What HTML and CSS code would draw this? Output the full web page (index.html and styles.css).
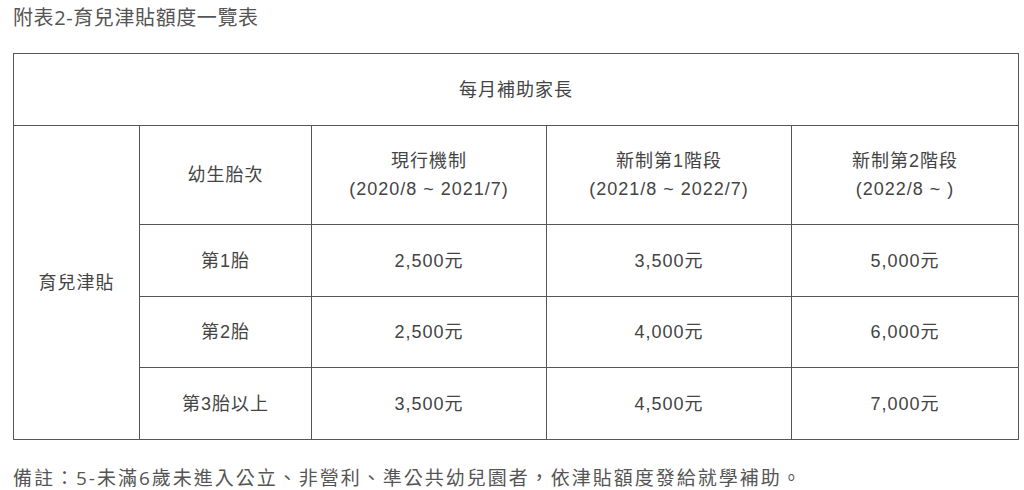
FILE: index.html
```html
<!DOCTYPE html>
<html lang="zh-TW">
<head>
<meta charset="utf-8">
<link rel="stylesheet" href="styles.css">
</head>
<body>
<div class="page">
  <div class="title">附表2-育兒津貼額度一覽表</div>
  <table class="grid">
    <colgroup>
      <col class="c1"><col class="c2"><col class="c3"><col class="c4"><col class="c5">
    </colgroup>
    <tr class="r-top"><td colspan="5">每月補助家長</td></tr>
    <tr class="r-head">
      <td rowspan="4">育兒津貼</td>
      <td>幼生胎次</td>
      <td>現行機制<br>(2020/8 ~ 2021/7)</td>
      <td>新制第1階段<br>(2021/8 ~ 2022/7)</td>
      <td>新制第2階段<br>(2022/8 ~ )</td>
    </tr>
    <tr class="r-a"><td>第1胎</td><td>2,500元</td><td>3,500元</td><td>5,000元</td></tr>
    <tr class="r-b"><td>第2胎</td><td>2,500元</td><td>4,000元</td><td>6,000元</td></tr>
    <tr class="r-c"><td>第3胎以上</td><td>3,500元</td><td>4,500元</td><td>7,000元</td></tr>
  </table>
  <div class="note">備註：5-未滿6歲未進入公立、非營利、準公共幼兒園者，依津貼額度發給就學補助。</div>
</div>
</body>
</html>
```
FILE: styles.css
```css
html, body {
  margin: 0;
  padding: 0;
  background: #ffffff;
}
.page {
  padding: 4px 0 0 13px;
}
.title {
  font-family: "Open Sans", "Noto Sans CJK TC", sans-serif;
  font-size: 20px;
  line-height: 28px;
  letter-spacing: 0.6px;
  color: #555555;
  height: 49px;
}
.grid {
  border-collapse: collapse;
  table-layout: fixed;
  width: 1005px;
  font-family: "Liberation Sans", "Noto Sans CJK TC", sans-serif;
  font-size: 18px;
  letter-spacing: 1px;
  line-height: 28px;
  color: #444444;
}
.grid td {
  border: 1px solid #555555;
  text-align: center;
  vertical-align: middle;
  padding: 0;
}
.c1 { width: 126px; }
.c2 { width: 172px; }
.c3 { width: 235px; }
.c4 { width: 245px; }
.c5 { width: 227px; }
.r-top { height: 72px; }
.r-head { height: 99px; }
.r-a { height: 72px; }
.r-b { height: 71px; }
.r-c { height: 72px; }
.note {
  margin-top: 24px;
  font-family: "Open Sans", "Noto Sans CJK TC", sans-serif;
  font-size: 19px;
  line-height: 28px;
  letter-spacing: 2px;
  color: #555555;
}
```
